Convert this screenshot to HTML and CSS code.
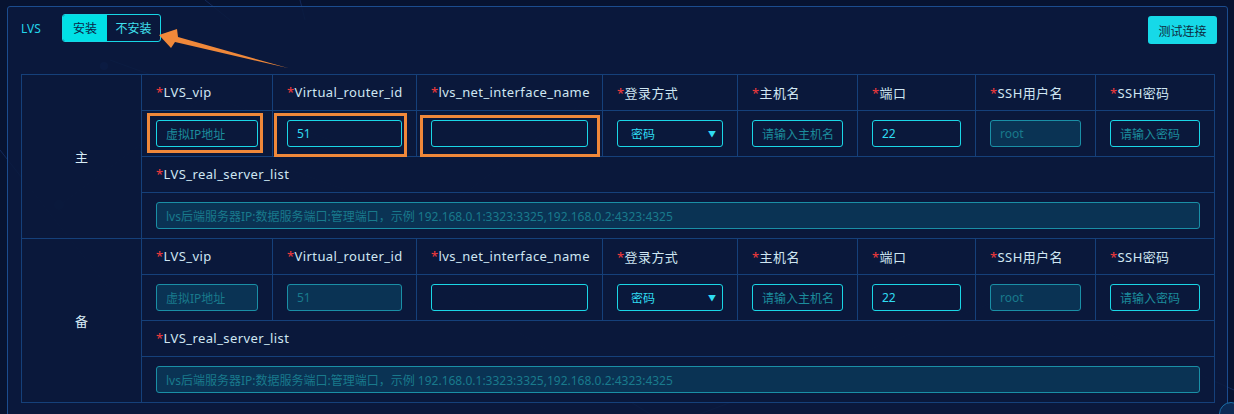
FILE: index.html
```html
<!DOCTYPE html>
<html lang="zh">
<head>
<meta charset="utf-8">
<link rel="stylesheet" href="styles.css">
</head>
<body>
<svg class="bg-lines" width="1234" height="414" viewBox="0 0 1234 414">
  <g stroke="#13295a" stroke-width="1" fill="none">
    <line x1="205" y1="0" x2="230" y2="20"/>
    <line x1="300" y1="0" x2="305" y2="20"/>
    <line x1="0" y1="150" x2="110" y2="290"/>
    <line x1="110" y1="60" x2="330" y2="140"/>
    <line x1="60" y1="205" x2="200" y2="100"/>
    <line x1="290" y1="170" x2="430" y2="220"/>
    <line x1="430" y1="220" x2="600" y2="90"/>
    <line x1="450" y1="290" x2="650" y2="414"/>
    <line x1="700" y1="414" x2="1000" y2="300"/>
    <line x1="1100" y1="330" x2="1234" y2="390"/>
  </g>
  <circle cx="59" cy="205" r="5" fill="#12285a"/>
  <circle cx="104" cy="66" r="4" fill="#12285a"/>
</svg>
<div class="panel">
  <div class="topbar">
    <div class="left">
      <span class="lvs">LVS</span>
      <div class="toggle">
        <span class="seg on">安装</span>
        <span class="seg">不安装</span>
      </div>
    </div>
    <button class="test">测试连接</button>
  </div>
  <table class="grid">
    <colgroup>
      <col style="width:120px"><col style="width:131px"><col style="width:144px"><col style="width:186px"><col style="width:135px"><col style="width:120px"><col style="width:118px"><col style="width:120px"><col style="width:119px">
    </colgroup>
    <tbody>
      <tr class="hrow">
        <td rowspan="4" class="side">主</td>
        <td><i>*</i>LVS_vip</td>
        <td><i>*</i>Virtual_router_id</td>
        <td><i>*</i>lvs_net_interface_name</td>
        <td><i>*</i>登录方式</td>
        <td><i>*</i>主机名</td>
        <td><i>*</i>端口</td>
        <td><i>*</i>SSH用户名</td>
        <td><i>*</i>SSH密码</td>
      </tr>
      <tr class="irow">
        <td><div class="inp ph mark">虚拟IP地址</div></td>
        <td><div class="inp val mark">51</div></td>
        <td><div class="inp mark"></div></td>
        <td><div class="inp val sel">密码<span class="caret">▼</span></div></td>
        <td><div class="inp ph">请输入主机名</div></td>
        <td><div class="inp val">22</div></td>
        <td><div class="inp ph dis">root</div></td>
        <td><div class="inp ph">请输入密码</div></td>
      </tr>
      <tr class="hrow">
        <td colspan="8"><i>*</i>LVS_real_server_list</td>
      </tr>
      <tr class="irow">
        <td colspan="8"><div class="inp ph dis">lvs后端服务器IP:数据服务端口:管理端口，示例 192.168.0.1:3323:3325,192.168.0.2:4323:4325</div></td>
      </tr>
      <tr class="hrow">
        <td rowspan="4" class="side">备</td>
        <td><i>*</i>LVS_vip</td>
        <td><i>*</i>Virtual_router_id</td>
        <td><i>*</i>lvs_net_interface_name</td>
        <td><i>*</i>登录方式</td>
        <td><i>*</i>主机名</td>
        <td><i>*</i>端口</td>
        <td><i>*</i>SSH用户名</td>
        <td><i>*</i>SSH密码</td>
      </tr>
      <tr class="irow">
        <td><div class="inp ph dis">虚拟IP地址</div></td>
        <td><div class="inp ph dis">51</div></td>
        <td><div class="inp"></div></td>
        <td><div class="inp val sel">密码<span class="caret">▼</span></div></td>
        <td><div class="inp ph">请输入主机名</div></td>
        <td><div class="inp val">22</div></td>
        <td><div class="inp ph dis">root</div></td>
        <td><div class="inp ph">请输入密码</div></td>
      </tr>
      <tr class="hrow">
        <td colspan="8"><i>*</i>LVS_real_server_list</td>
      </tr>
      <tr class="irow">
        <td colspan="8"><div class="inp ph dis">lvs后端服务器IP:数据服务端口:管理端口，示例 192.168.0.1:3323:3325,192.168.0.2:4323:4325</div></td>
      </tr>
    </tbody>
  </table>
</div>
<div class="hl hl1"></div>
<div class="hl hl2"></div>
<div class="hl hl3"></div>
<svg class="arrow" width="1234" height="414" viewBox="0 0 1234 414">
  <polygon points="159,35 177,29 178,37 288,68 175,42 171,48" fill="#f0883a"/>
</svg>
<div class="corner-icon"></div>
</body>
</html>
```

FILE: styles.css
```css
html, body {
  margin: 0;
  padding: 0;
}
body {
  width: 1234px;
  height: 414px;
  overflow: hidden;
  background: #071331;
  font-family: "Noto Sans", "Noto Sans CJK SC", sans-serif;
  font-size: 13px;
  color: #cfe6f2;
  position: relative;
}
.bg-lines {
  position: absolute;
  left: 0;
  top: 0;
  z-index: 0;
}
.panel {
  position: relative;
  z-index: 1;
  margin: 6px 0 0 7px;
  width: 1221px;
  height: 420px;
  border: 1px solid #1b4c8e;
  border-radius: 3px 3px 0 0;
  background: rgba(10, 26, 62, 0.86);
  box-sizing: border-box;
  padding: 0 0 0 13px;
}
.topbar {
  height: 67px;
  display: flex;
  justify-content: space-between;
  align-items: flex-start;
  padding-right: 10px;
}
.left {
  display: flex;
  align-items: center;
  margin-top: 7px;
}
.lvs {
  color: #22d4ea;
  font-size: 12px;
  width: 41px;
}
.toggle {
  display: flex;
  height: 28px;
  border: 1px solid #17d6e6;
  border-radius: 3px;
  box-sizing: border-box;
  overflow: hidden;
}
.seg {
  display: flex;
  align-items: center;
  justify-content: center;
  width: 53px;
  color: #3fe0ee;
  font-size: 12px;
}
.seg.on {
  width: 44px;
  background: #00e0e6;
  color: #0b2448;
}
.test {
  margin-top: 9px;
  height: 28px;
  width: 69px;
  border: none;
  border-radius: 3px;
  background: #16d9e8;
  color: #0e2a40;
  font-family: "Noto Sans CJK SC", sans-serif;
  font-size: 12px;
  padding: 0;
}
.grid {
  border-collapse: collapse;
  table-layout: fixed;
  width: 1193px;
  background: rgba(10, 24, 58, 0.7);
}
.grid td {
  border: 1px solid #15407a;
  padding: 0 14px;
  box-sizing: border-box;
  white-space: nowrap;
  overflow: hidden;
}
.grid i {
  font-style: normal;
  color: #f53b3b;
}
.hrow td {
  height: 36px;
  color: #cfe6f2;
  letter-spacing: 0.4px;
  padding-bottom: 1px;
}
.irow td {
  height: 46px;
}
.grid td.side {
  text-align: center;
  color: #d8ecf6;
  padding: 0;
  letter-spacing: 0;
}
.inp {
  height: 27px;
  box-sizing: border-box;
  border: 1px solid #1ad6e6;
  border-radius: 3px;
  display: flex;
  align-items: center;
  padding: 0 9px;
  font-size: 12px;
  color: #2ad8f0;
  position: relative;
  overflow: hidden;
}
.inp.ph {
  color: #1c8c9c;
}
.inp.val {
  color: #2fdcf2;
}
.inp.dis {
  background: #0a3354;
  border-color: #1a8fa6;
  color: #197a8c;
}
.inp.sel {
  padding-left: 13px;
}
.caret {
  position: absolute;
  right: 6px;
  top: 7px;
  font-size: 8px;
  color: #2fdcf2;
}
.hl {
  position: absolute;
  z-index: 3;
  border: 3px solid #f0883a;
  box-sizing: border-box;
}
.hl1 { left: 147px; top: 113px; width: 116px; height: 40px; }
.hl2 { left: 274px; top: 113px; width: 133px; height: 44px; }
.hl3 { left: 420px; top: 115px; width: 180px; height: 42px; }
.arrow {
  position: absolute;
  left: 0;
  top: 0;
  z-index: 4;
}
.corner-icon {
  position: absolute;
  z-index: 4;
  left: 1219px;
  top: 402px;
  width: 24px;
  height: 24px;
  border-radius: 50%;
  background: #0c2a55;
  border: 1px solid #1a6fa8;
  box-sizing: border-box;
}
```
